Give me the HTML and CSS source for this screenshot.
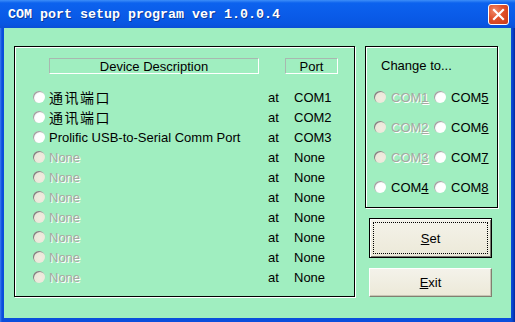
FILE: index.html
```html
<!DOCTYPE html>
<html>
<head>
<meta charset="utf-8">
<link rel="stylesheet" href="styles.css">
</head>
<body>
<div class="window">
  <div class="titlebar">
    <span class="title">COM port setup program ver 1.0.0.4</span>
    <div class="close">
      <svg width="21" height="21" viewBox="0 0 21 21"><path d="M6 6 L15 15 M15 6 L6 15" stroke="#fff" stroke-width="2.2" stroke-linecap="square"/></svg>
    </div>
  </div>
  <div class="client">
    <div class="group devices">
      <div class="header">
        <div class="hbox desc-h">Device Description</div>
        <div class="hbox port-h">Port</div>
      </div>
      <div class="row"><span class="radio"></span><span class="desc cjk">通讯端口</span><span class="at">at</span><span class="port">COM1</span></div>
      <div class="row"><span class="radio"></span><span class="desc cjk">通讯端口</span><span class="at">at</span><span class="port">COM2</span></div>
      <div class="row"><span class="radio"></span><span class="desc">Prolific USB-to-Serial Comm Port</span><span class="at">at</span><span class="port">COM3</span></div>
      <div class="row off"><span class="radio"></span><span class="desc">None</span><span class="at">at</span><span class="port">None</span></div>
      <div class="row off"><span class="radio"></span><span class="desc">None</span><span class="at">at</span><span class="port">None</span></div>
      <div class="row off"><span class="radio"></span><span class="desc">None</span><span class="at">at</span><span class="port">None</span></div>
      <div class="row off"><span class="radio"></span><span class="desc">None</span><span class="at">at</span><span class="port">None</span></div>
      <div class="row off"><span class="radio"></span><span class="desc">None</span><span class="at">at</span><span class="port">None</span></div>
      <div class="row off"><span class="radio"></span><span class="desc">None</span><span class="at">at</span><span class="port">None</span></div>
      <div class="row off"><span class="radio"></span><span class="desc">None</span><span class="at">at</span><span class="port">None</span></div>
    </div>
    <div class="side">
      <div class="group change">
        <div class="change-title">Change to...</div>
        <div class="com-grid">
          <div class="opt disabled"><span class="radio"></span><span>COM<u>1</u></span></div>
          <div class="opt"><span class="radio"></span><span>COM<u>5</u></span></div>
          <div class="opt disabled"><span class="radio"></span><span>COM<u>2</u></span></div>
          <div class="opt"><span class="radio"></span><span>COM<u>6</u></span></div>
          <div class="opt disabled"><span class="radio"></span><span>COM<u>3</u></span></div>
          <div class="opt"><span class="radio"></span><span>COM<u>7</u></span></div>
          <div class="opt"><span class="radio"></span><span>COM<u>4</u></span></div>
          <div class="opt"><span class="radio"></span><span>COM<u>8</u></span></div>
        </div>
      </div>
      <div class="btn default"><div class="focus"><span><u>S</u>et</span></div></div>
      <div class="btn exit"><span><u>E</u>xit</span></div>
    </div>
  </div>
</div>
</body>
</html>
```

FILE: styles.css
```css
* { box-sizing: border-box; }
html, body { margin: 0; padding: 0; background: #0a4cd8; }
.window {
  width: 515px;
  height: 322px;
  display: flex;
  flex-direction: column;
  background: linear-gradient(to right, #3c7ef0 0, #0a4edc 2px, #0a4edc 511px, #0840c8 513px, #002a9c 515px);
  font-family: "Liberation Sans", Arial, sans-serif;
  font-size: 13px;
  color: #000;
}
.titlebar {
  height: 28px;
  flex: none;
  display: flex;
  align-items: center;
  padding: 0 6px 0 8px;
  background: linear-gradient(to bottom, #3d8ef8 0, #0c62ee 3px, #0a5ce9 14px, #0856e2 24px, #0a4fd6 28px);
}
.title {
  flex: 1;
  font-family: "Liberation Mono", "Courier New", monospace;
  font-weight: bold;
  font-size: 13.33px;
  color: #fff;
  text-shadow: 1px 1px 0 #0a3a9a;
  margin-top: 1px;
}
.close {
  width: 21px;
  height: 21px;
  border: 1px solid #fff;
  border-radius: 3px;
  background: radial-gradient(circle at 30% 30%, #f08a6a 0, #e0502a 45%, #c83a18 100%);
  display: flex;
  align-items: center;
  justify-content: center;
  margin-top: 1px;
}
.close svg { display: block; margin: -1px; }
.client {
  flex: 1;
  margin: 0 4px 4px 4px;
  background: #a0eec0;
  display: flex;
  padding: 18px 0 0 10px;
  gap: 10px;
}
.group {
  border: 1px solid #000;
  box-shadow: 1px 1px 0 #fff, inset 1px 1px 0 #fff;
}
.devices {
  width: 341px;
  height: 251px;
  padding: 11px 0 0 18px;
}
.header {
  display: flex;
  height: 16px;
  margin-left: 16px;
  margin-bottom: 13px;
}
.hbox {
  height: 16px;
  border-top: 1px solid #a8b8b0;
  border-left: 1px solid #a8b8b0;
  border-right: 1px solid #fff;
  border-bottom: 1px solid #fff;
  display: flex;
  align-items: center;
  justify-content: center;
  font-size: 13px;
}
.desc-h { width: 210px; }
.port-h { width: 53px; margin-left: 26px; }
.row {
  display: flex;
  align-items: center;
  height: 20px;
}
.radio {
  width: 12px;
  height: 12px;
  border-radius: 50%;
  flex: none;
  background: radial-gradient(circle at 60% 60%, #ffffff 0, #ffffff 45%, #e4e4e4 80%, #c8c8c8 100%);
  box-shadow: inset 1px 1px 0 #a0a0a0;
}
.row .radio { margin-right: 4px; }
.desc { width: 219px; white-space: nowrap; }
.cjk {
  font-family: "Noto Sans CJK SC", "Liberation Sans", sans-serif;
  font-size: 14px;
  letter-spacing: 1.5px;
}
.at { width: 26px; }
.off .radio,
.disabled .radio {
  background: radial-gradient(circle at 60% 60%, #f0ece0 0, #ece8da 50%, #d8d4c8 100%);
  box-shadow: inset 1px 1px 0 #808080;
}
.off .desc,
.disabled span:last-child {
  color: #a8a8a0;
  text-shadow: 1px 1px 0 #fff;
}
.side {
  width: 133px;
  display: flex;
  flex-direction: column;
}
.change {
  height: 162px;
  padding: 11px 0 0 0;
}
.change-title {
  height: 16px;
  line-height: 16px;
  padding-left: 15px;
  margin-bottom: 8px;
}
.com-grid {
  display: grid;
  grid-template-columns: 60px 60px;
  grid-auto-rows: 30px;
  padding-left: 8px;
}
.opt {
  display: flex;
  align-items: center;
  white-space: nowrap;
}
.opt .radio { margin-right: 5px; }
.btn {
  width: 123px;
  margin-left: 4px;
  background: linear-gradient(to bottom, #f4f2ea, #ece9d8);
  display: flex;
  align-items: center;
  justify-content: center;
  font-size: 13px;
}
.btn.default {
  height: 40px;
  margin-top: 10px;
  border: 1px solid #000;
  box-shadow: inset 1px 1px 0 #fff, inset -1px -1px 0 #7a7a70;
  padding: 3px;
}
.focus {
  width: 100%;
  height: 100%;
  border: 1px dotted #000;
  display: flex;
  align-items: center;
  justify-content: center;
}
.btn.exit {
  height: 29px;
  margin-top: 10px;
  border-top: 1px solid #fff;
  border-left: 1px solid #fff;
  border-right: 1px solid #808070;
  border-bottom: 1px solid #808070;
  box-shadow: inset -1px -1px 0 #c8c4b4;
}
```
